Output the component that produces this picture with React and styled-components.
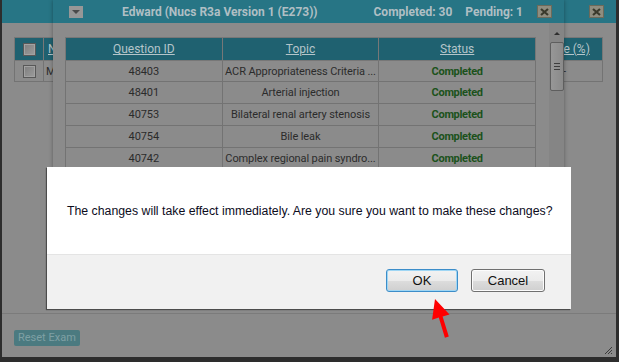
import React from 'react'
import styled, { createGlobalStyle } from 'styled-components'

const GlobalStyle = createGlobalStyle`
  html, body {
    margin: 0;
    padding: 0;
    background: #2d2d2d;
  }
  body {
    font-family: Roboto, "Liberation Sans", sans-serif;
  }
`

const Desktop = styled.div`
  position: relative;
  width: 619px;
  height: 362px;
  overflow: hidden;
  box-sizing: border-box;
  padding: 0 3px 5px 2px;
  background: #2d2d2d;
`

const Window = styled.div`
  position: relative;
  height: 100%;
  display: flex;
  flex-direction: column;
  background: #8b8b8b;
`

const TitleBar = styled.div`
  flex: 0 0 23px;
  display: flex;
  align-items: center;
  justify-content: ${p => (p.$end ? 'flex-end' : 'flex-start')};
  padding: ${p => p.$pad};
  background: #277585;
  color: #b0bfc4;
  font-size: 12px;
  font-weight: 700;
  white-space: nowrap;
`

const CloseBox = styled.div`
  width: 13px;
  height: 11px;
  border: 1px solid #6c6a5a;
  background: #8f8d7f;
  display: flex;
  align-items: center;
  justify-content: center;
`

const MenuBox = styled.div`
  width: 14px;
  height: 12px;
  background: #979797;
  display: flex;
  align-items: center;
  justify-content: center;
  margin-right: 39px;
`

const TitleText = styled.span`
  flex: 1;
`

const Counts = styled.span`
  margin-right: ${p => p.$gap}px;
`

const OuterBody = styled.div`
  padding: 14px 13px 0 12px;
`

const Table = styled.table`
  width: 100%;
  table-layout: fixed;
  border-collapse: collapse;
  font-size: 11px;
  color: #2b2b2b;
`

const Th = styled.th`
  height: 22px;
  padding: 0 4px;
  background: #1f6170;
  color: #b5c5ca;
  font-size: 12px;
  font-weight: 400;
  text-decoration: underline;
  border: 1px solid #777;
  text-align: ${p => p.$align || 'center'};
  white-space: nowrap;
  overflow: hidden;
`

const Td = styled.td`
  height: 21px;
  padding: 0 2px;
  border: 1px solid #737373;
  text-align: ${p => p.$align || 'center'};
  white-space: nowrap;
  overflow: hidden;
  text-overflow: ellipsis;
  color: ${p => (p.$done ? '#1b521b' : '#2b2b2b')};
  font-weight: ${p => (p.$done ? 700 : 400)};
  letter-spacing: ${p => (p.$done ? '-0.3px' : '-0.1px')};
  tr:first-child > & {
    height: 20px;
  }
`

const Check = styled.span`
  display: inline-block;
  vertical-align: middle;
  width: 11px;
  height: 11px;
  border: 1px solid #585858;
  background: linear-gradient(135deg, #7e7e7e, #9c9c9c);
  box-shadow: inset 0 0 0 1px #a2a2a2;
`

const Footer = styled.div`
  margin-top: auto;
  border-top: 1px solid #7b7b7b;
  padding: 12px 12px 11px;
`

const ResetButton = styled.div`
  display: inline-block;
  height: 16px;
  line-height: 16px;
  padding: 0 4px;
  border-radius: 2px;
  background: #4b7a80;
  color: #7fa0a4;
  font-size: 11px;
`

const Grip = styled.svg`
  position: absolute;
  right: 3px;
  bottom: 2px;
`

const Modal = styled.div`
  position: absolute;
  left: 51px;
  top: 0;
  width: 511px;
  height: 300px;
  display: flex;
  flex-direction: column;
  background: #8b8b8b;
  box-shadow: 0 0 4px rgba(0, 0, 0, 0.35);
`

const ModalBody = styled.div`
  flex: 1;
  display: flex;
  min-height: 0;
`

const ModalContent = styled.div`
  flex: 1;
  padding: 14px 13px 0 12px;
`

const ScrollTrack = styled.div`
  width: 15px;
  background: #858585;
  display: flex;
  flex-direction: column;
  align-items: center;
`

const ScrollArrow = styled.div`
  margin: 9px 0 7px;
  width: 0;
  height: 0;
  border-left: 3px solid transparent;
  border-right: 3px solid transparent;
  border-bottom: 3px solid #2e2e2e;
`

const ScrollThumb = styled.div`
  width: 12px;
  height: 47px;
  border: 1px solid #5e5e5e;
  border-radius: 2px;
  background: linear-gradient(90deg, #979797, #8a8a8a);
  display: flex;
  flex-direction: column;
  align-items: center;
  justify-content: center;
  gap: 2px;
  &::before, &::after, & > i {
    content: '';
    display: block;
    width: 6px;
    height: 1px;
    background: #3e3e3e;
  }
`

const Dialog = styled.div`
  position: absolute;
  left: 47px;
  top: 167px;
  width: 524px;
  display: flex;
  flex-direction: column;
  background: #fff;
  box-shadow: -1px 1px 1px rgba(0, 0, 0, 0.45);
  font-family: "Liberation Sans", Arial, sans-serif;
`

const Message = styled.div`
  height: 87px;
  display: flex;
  align-items: center;
  padding: 0 20px;
  font-size: 12.3px;
  white-space: nowrap;
  color: #0c0c1c;
`

const DialogFooter = styled.div`
  height: 55px;
  border-top: 1px solid #e4e4e4;
  background: #f1f1f1;
  display: flex;
  justify-content: flex-end;
  align-items: flex-start;
  gap: 13px;
  padding: 14px 26px 0 0;
  box-sizing: border-box;
`

const Button = styled.button`
  width: ${p => p.$w}px;
  height: 23px;
  padding: 0;
  border-radius: 3px;
  border: 1px solid ${p => (p.$focus ? '#3c8dc9' : '#707070')};
  box-shadow: ${p => (p.$focus ? 'inset 0 0 0 1px #9fd6f4' : 'inset 0 0 0 1px #fcfcfc')};
  background: linear-gradient(#f2f2f2 0%, #ebebeb 50%, #dddddd 51%, #cfcfcf 100%);
  font-family: "Liberation Sans", Arial, sans-serif;
  font-size: 13px;
  color: #111;
`

const Arrow = styled.svg`
  position: absolute;
  left: 425px;
  top: 296px;
`

const questions = [
  { id: '48403', topic: 'ACR Appropriateness Criteria ...' },
  { id: '48401', topic: 'Arterial injection' },
  { id: '40753', topic: 'Bilateral renal artery stenosis' },
  { id: '40754', topic: 'Bile leak' },
  { id: '40742', topic: 'Complex regional pain syndro...' },
  { id: '40741', topic: 'Cholecystitis' },
  { id: '40740', topic: 'Cirrhosis' },
]

const XIcon = () => (
  <svg width="9" height="8" viewBox="0 0 9 8">
    <path d="M1 1 L8 7 M8 1 L1 7" stroke="#3a3a2c" strokeWidth="2.2" />
  </svg>
)

export default function App() {
  return (
    <Desktop>
      <GlobalStyle />
      <Window>
        <TitleBar $end $pad="0 12px 0 0">
          <CloseBox><XIcon /></CloseBox>
        </TitleBar>
        <OuterBody>
          <Table>
            <colgroup>
              <col style={{ width: 29 }} />
              <col />
              <col style={{ width: 76 }} />
            </colgroup>
            <thead>
              <tr>
                <Th><Check /></Th>
                <Th $align="left">Name</Th>
                <Th>Score (%)</Th>
              </tr>
            </thead>
            <tbody>
              <tr>
                <Td><Check /></Td>
                <Td $align="left">Mark Edward</Td>
                <Td>-</Td>
              </tr>
            </tbody>
          </Table>
        </OuterBody>
        <Footer>
          <ResetButton>Reset Exam</ResetButton>
        </Footer>
        <Grip width="9" height="9" viewBox="0 0 9 9">
          <path d="M1 8 L8 1 M4 8 L8 4 M7 8 L8 7" stroke="#3a3a3a" strokeWidth="1" />
        </Grip>

        <Modal>
          <TitleBar $pad="0 12px 0 16px">
            <MenuBox>
              <svg width="8" height="4" viewBox="0 0 8 4">
                <path d="M0 0 H8 L4 4 Z" fill="#4a4a4a" />
              </svg>
            </MenuBox>
            <TitleText>Edward (Nucs R3a Version 1 (E273))</TitleText>
            <Counts $gap={13}>Completed: 30</Counts>
            <Counts $gap={14}>Pending: 1</Counts>
            <CloseBox><XIcon /></CloseBox>
          </TitleBar>
          <ModalBody>
            <ModalContent>
              <Table>
                <thead>
                  <tr>
                    <Th>Question ID</Th>
                    <Th>Topic</Th>
                    <Th>Status</Th>
                  </tr>
                </thead>
                <tbody>
                  {questions.map(q => (
                    <tr key={q.id}>
                      <Td>{q.id}</Td>
                      <Td>{q.topic}</Td>
                      <Td $done>Completed</Td>
                    </tr>
                  ))}
                </tbody>
              </Table>
            </ModalContent>
            <ScrollTrack>
              <ScrollArrow />
              <ScrollThumb><i /></ScrollThumb>
            </ScrollTrack>
          </ModalBody>
        </Modal>
      </Window>

      <Dialog>
        <Message>
          The changes will take effect immediately. Are you sure you want to make these changes?
        </Message>
        <DialogFooter>
          <Button $w={72} $focus>OK</Button>
          <Button $w={74}>Cancel</Button>
        </DialogFooter>
      </Dialog>

      <Arrow width="32" height="44" viewBox="0 0 32 44">
        <path d="M10 3 L24.5 18.5 L17.6 20.4 L23.8 40.5 L19.9 41.7 L13.8 21.6 L7.1 23.8 Z" fill="#ff0000" />
      </Arrow>
    </Desktop>
  )
}
